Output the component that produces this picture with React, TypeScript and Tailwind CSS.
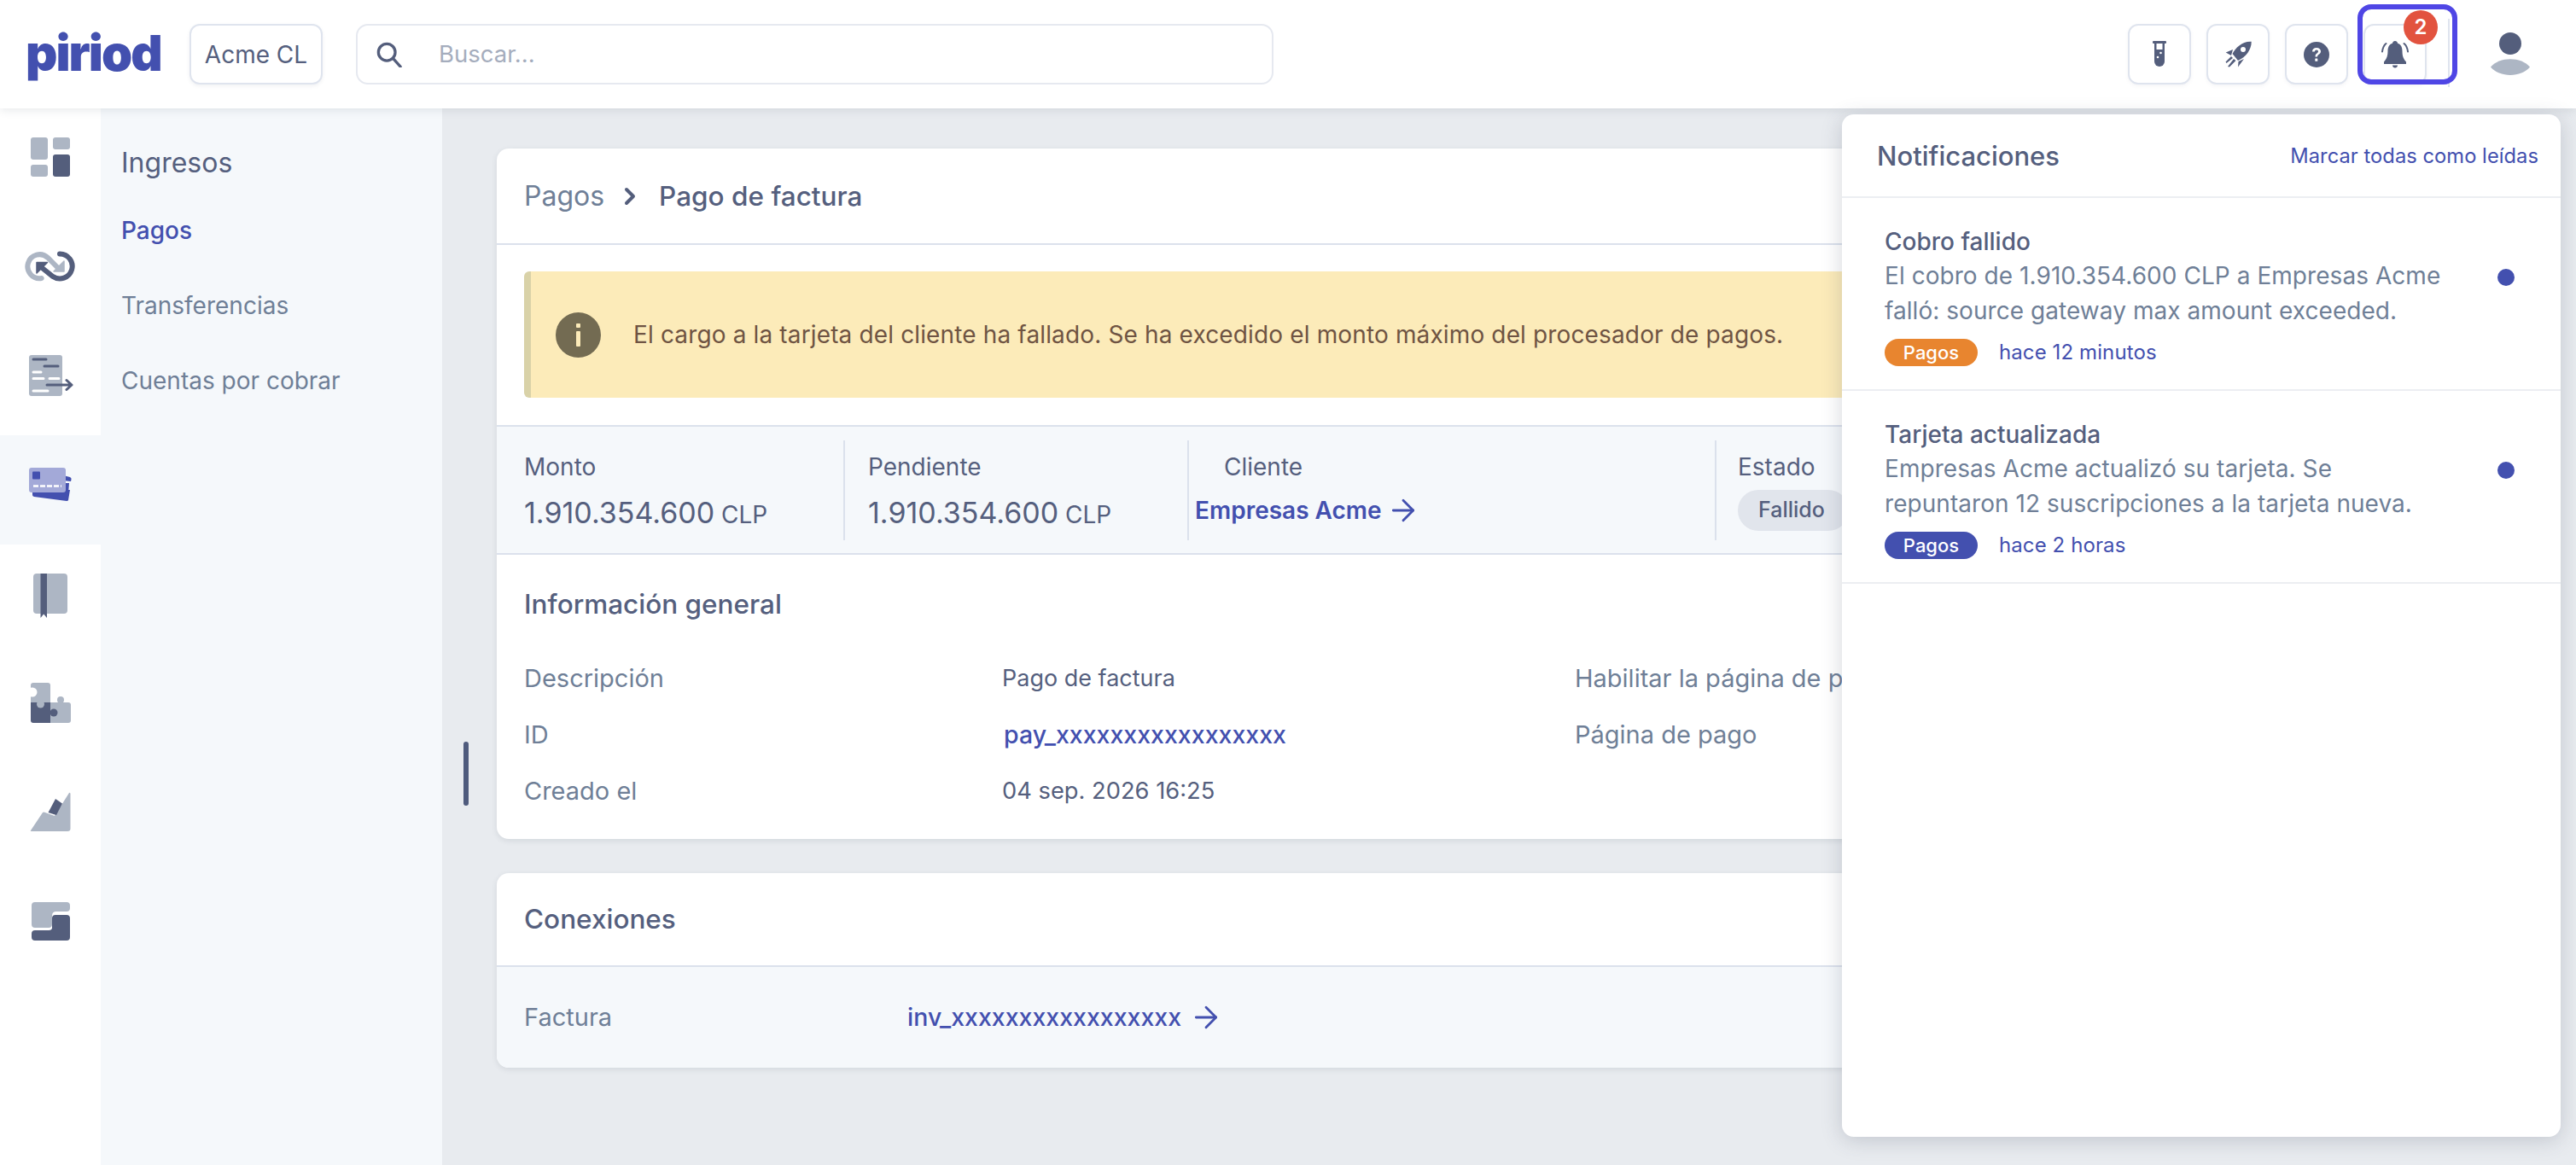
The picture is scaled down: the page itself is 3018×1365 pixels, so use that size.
import { ArrowRight, ChevronRight } from "lucide-react";

const dark = "#545e7c";
const light = "#adb6c4";
const blue = "#4350af";

function DashboardIcon() {
  return (
    <svg width="46" height="46" viewBox="0 0 46 46">
      <rect x="0" y="0" width="20" height="26" rx="3" fill={light} />
      <rect x="26" y="0" width="20" height="14" rx="3" fill={light} />
      <rect x="0" y="32" width="20" height="14" rx="3" fill={light} />
      <rect x="26" y="20" width="20" height="26" rx="3" fill={dark} />
    </svg>
  );
}

function LoopIcon() {
  return (
    <svg width="60" height="37" viewBox="0 0 60 37" fill="none" strokeLinecap="round">
      <path d="M19.700 33 A14 14 0 1 1 27 9 L38 20" stroke={light} strokeWidth="6" />
      <path d="M46 13 V25 H34 Z" fill={light} stroke={light} strokeWidth="1.500" strokeLinejoin="round" />
      <path d="M41 4.500 A14.500 14.500 0 1 1 33 31 L18 19" stroke={dark} strokeWidth="6" />
      <path d="M14 14.500 H26.500 L14 27 Z" fill={dark} stroke={dark} strokeWidth="1.500" strokeLinejoin="round" />
    </svg>
  );
}

function InvoiceIcon() {
  return (
    <svg width="52" height="48" viewBox="0 0 52 48" fill="none" strokeLinecap="round">
      <rect x="0" y="0" width="39" height="48" rx="3" fill={light} />
      <path d="M5 5 H20 M18 13 H34" stroke={dark} strokeWidth="3" />
      <path d="M5 20 H14 M5 27.500 H17 M24 27.500 H35 M5 42 H22" stroke="#fff" strokeWidth="3" />
      <path d="M21 35 H50 M44 29.500 L50 35 L44 40.500" stroke={dark} strokeWidth="3" strokeLinejoin="round" />
    </svg>
  );
}

function CardsIcon() {
  return (
    <svg width="50" height="39" viewBox="0 0 50 39">
      <path d="M40 9 L48 11 Q50 12 49.500 14 L49 16 L40 15 Z" fill={blue} />
      <path d="M4 26 H48 L46 38 Q46 39 44 39 L6 34 Q4 33.500 4 32 Z" fill={blue} />
      <path d="M42 18 H47 L46 30 H42 Z" fill={blue} />
      <rect x="0" y="0" width="43" height="29" rx="3" fill="#a3a9d8" />
      <rect x="4" y="4.500" width="9" height="9" rx="1" fill={blue} />
      <path d="M5 21.500 H38" stroke="#fff" strokeWidth="2.500" strokeDasharray="6 2" />
    </svg>
  );
}

function BookIcon() {
  return (
    <svg width="40" height="52" viewBox="0 0 40 52">
      <rect x="0" y="0" width="40" height="47" rx="4" fill={light} />
      <path d="M8.500 0 H16 V52 L12.200 47.500 L8.500 52 Z" fill={dark} />
    </svg>
  );
}

function PuzzleIcon() {
  return (
    <svg width="47" height="47" viewBox="0 0 47 47">
      <path d="M3 0 H20 Q23 0 23 3 V23 H0 V3 Q0 0 3 0 Z" fill={light} />
      <circle cx="2" cy="11" r="5.500" fill="#fff" />
      <path d="M0 23 H23 V47 H3 Q0 47 0 44 Z" fill={dark} />
      <circle cx="11.500" cy="25" r="4.500" fill={light} />
      <path d="M23 23 H44 Q47 23 47 26 V44 Q47 47 44 47 H23 Z" fill={light} />
      <circle cx="35" cy="20" r="4" fill={light} />
      <circle cx="27" cy="35" r="4.500" fill={dark} />
    </svg>
  );
}

function ChartIcon() {
  return (
    <svg width="48" height="47" viewBox="0 0 48 47">
      <path d="M1 45 L15 24 Q16 23 18 24 L29 28 L46 1 Q47 0 47.500 2 V43 Q47.500 46 44 46 H2 Q0 46 1 45 Z" fill={light} />
      <path d="M30 8 L38 13.500 L31 27 L21.500 24 Z" fill={dark} />
    </svg>
  );
}

function StackIcon() {
  return (
    <svg width="45" height="45" viewBox="0 0 45 45">
      <path d="M4 0 H41 Q45 0 45 4 V7 Q45 11 41 11 H29 Q24 11 24 16 V26 Q24 30 20 30 H4 Q0 30 0 26 V4 Q0 0 4 0 Z" fill={light} />
      <path d="M28 15 H41 Q45 15 45 19 V41 Q45 45 41 45 H4 Q0 45 0 41 V37 Q0 33 4 33 H20 Q24 33 24 30 V19 Q24 15 28 15 Z" fill={dark} />
    </svg>
  );
}

function TubeIcon() {
  return (
    <svg width="16" height="31" viewBox="0 0 16 31">
      <rect x="0" y="0" width="16" height="3" rx="1" fill={dark} />
      <path d="M2 3 H14 V24 A6 6 0 0 1 2 24 Z" fill={dark} />
      <rect x="4.500" y="3" width="7" height="7" fill="#fff" />
      <circle cx="9.500" cy="14" r="1.300" fill="#fff" />
      <circle cx="6" cy="19" r="1.300" fill="#fff" />
    </svg>
  );
}

function RocketIcon() {
  return (
    <svg width="31" height="31" viewBox="0 0 31 31">
      <path d="M30.700 0.700 C20 0 12 8 8.500 15 L15 23 C24 19 31 10 30.700 0.700 Z" fill={dark} />
      <circle cx="21" cy="10" r="3" fill="#fff" />
      <path d="M0.700 13.500 L9 10 L7 17 Z M15 30.500 L22 21 L15.500 24 Z" fill={dark} />
      <path d="M7 18 L0.500 24.500 L1.500 26 L9 20 Z M10 21 L3 30 L5 30.500 L12.500 23 Z" fill={dark} />
    </svg>
  );
}

function HelpIcon() {
  return (
    <svg width="30" height="30" viewBox="0 0 30 30">
      <circle cx="15" cy="15" r="15" fill={dark} />
      <path d="M10 11.500 C10 8.500 12 7 15 7 C18 7 20 8.800 20 11.200 C20 14.500 16 14.500 16 17.500 H13.500 C13.500 13.500 17 13.500 17 11.300 C17 10.200 16.200 9.500 15 9.500 C13.800 9.500 13 10.300 12.800 11.500 Z" fill="#fff" />
      <rect x="13.300" y="19.500" width="3" height="3.200" rx="0.500" fill="#fff" />
    </svg>
  );
}

function BellIcon() {
  return (
    <svg width="34" height="32" viewBox="0 0 34 32" fill="none">
      <path d="M17 0 C19 0 20 1.500 20 2.800 C24 4 25.500 7.500 25.500 12 C25.500 18 27 21 30 24.500 V27 H4 V24.500 C7 21 8.500 18 8.500 12 C8.500 7.500 10 4 14 2.800 C14 1.500 15 0 17 0 Z" fill={dark} />
      <path d="M14 28.500 H20 C20 30.500 18.500 31.500 17 31.500 C15.500 31.500 14 30.500 14 28.500 Z" fill={dark} />
      <path d="M6.500 3 C4 5 2.500 8 2 12.500 M27.500 3 C30 5 31.500 8 32 12.500" stroke={dark} strokeWidth="2" strokeLinecap="round" />
    </svg>
  );
}

function HeaderButton({ children }: { children: React.ReactNode }) {
  return (
    <button className="w-[74px] h-[71px] flex items-center justify-center rounded-[12px] border-[2px] border-[#dfe4ee] bg-white shadow-[0_2px_4px_rgba(80,90,120,0.06)]">
      {children}
    </button>
  );
}

function Notification({
  title,
  lines,
  tagClass,
  when,
}: {
  title: string;
  lines: string[];
  tagClass: string;
  when: string;
}) {
  return (
    <div className="relative h-[226px] border-b-[2px] border-[#eceef2] pl-[50px] pt-[31px]">
      <div className="text-[28px] leading-[40px] font-[450] text-[#555f7e]">{title}</div>
      <div className="text-[28px] leading-[41px] tracking-[0.05px] text-[#6f7f97]">
        {lines.map((l) => (
          <div key={l}>{l}</div>
        ))}
      </div>
      <div className="flex items-center gap-[25px] mt-[10px]">
        <span className={"w-[109px] h-[32px] rounded-full flex items-center justify-center text-white text-[22px] font-medium " + tagClass}>
          Pagos
        </span>
        <span className="text-[24px] tracking-[0.1px] text-[#4350af]">{when}</span>
      </div>
      <span className="absolute left-[768px] top-[83px] w-[20px] h-[20px] rounded-full bg-[#4350af]" />
    </div>
  );
}

export default function App() {
  return (
    <div className="relative h-screen w-full overflow-hidden bg-[#e8ebef] flex flex-col font-['Inter',sans-serif] text-[28px] text-[#555f7e]">
      {/* header */}
      <header className="relative z-10 h-[127px] shrink-0 bg-white shadow-[0_2px_10px_rgba(60,70,90,0.12)] flex items-center pl-[30px] pr-[54px]">
        <div className="w-[160px] text-[58px] leading-none font-black tracking-[-2px] text-[#4350af] -mt-[4px]">piriod</div>
        <button className="ml-[32px] w-[156px] h-[71px] rounded-[12px] border-[2px] border-[#dfe4ee] bg-white text-[28px] shadow-[0_2px_4px_rgba(80,90,120,0.08)]">
          Acme CL
        </button>
        <div className="ml-[39px] w-[1075px] h-[71px] rounded-[14px] border-[2px] border-[#e6e9f0] flex items-center pl-[22px]">
          <svg width="30" height="30" viewBox="0 0 32 32" fill="none" stroke={dark} strokeWidth="3.500">
            <circle cx="13" cy="13" r="10.500" />
            <path d="M21 21 L30 31" strokeLinecap="round" />
          </svg>
          <span className="ml-[43px] text-[27.500px] text-[#a5adbd]">Buscar...</span>
        </div>
        <div className="ml-auto flex items-center gap-[18px]">
          <HeaderButton>
            <TubeIcon />
          </HeaderButton>
          <HeaderButton>
            <RocketIcon />
          </HeaderButton>
          <HeaderButton>
            <HelpIcon />
          </HeaderButton>
          <HeaderButton>
            <BellIcon />
          </HeaderButton>
          <div className="relative ml-[57px] w-[46px] h-[52px]">
            <div className="absolute left-[10px] top-0 w-[26px] h-[26px] rounded-full bg-[#545e7c]" />
            <svg className="absolute left-0 top-[31px]" width="46" height="19" viewBox="0 0 46 19">
              <path d="M0 9.500 C10 -3 36 -3 46 9.500 C36 22 10 22 0 9.500 Z" fill={light} />
            </svg>
          </div>
        </div>
        {/* focus ring on the bell */}
        <div className="absolute left-[2868px] top-[22px] w-[2px] h-[80px] bg-[#dfe4ee]" />
        <div className="absolute left-[2762px] top-[5px] w-[117px] h-[94px] rounded-[16px] border-[6px] border-[#4f46e5]" />
        <span className="absolute left-[2816px] top-[12px] w-[40px] h-[40px] rounded-full bg-[#e2533f] text-white text-[24px] font-semibold flex items-center justify-center">
          2
        </span>
      </header>

      <div className="flex-1 flex overflow-hidden">
        {/* icon rail */}
        <nav className="w-[118px] shrink-0 bg-white flex flex-col">
          <div className="h-[127px] flex justify-center pt-[34px]">
            <DashboardIcon />
          </div>
          <div className="h-[128px] flex justify-center pt-[39px]">
            <LoopIcon />
          </div>
          <div className="h-[128px] flex justify-center pl-[2px] pt-[34px]">
            <InvoiceIcon />
          </div>
          <div className="h-[128px] bg-[#f5f8fb] flex justify-center pt-[38px]">
            <CardsIcon />
          </div>
          <div className="h-[128px] flex justify-center pt-[34px]">
            <BookIcon />
          </div>
          <div className="h-[128px] flex justify-center pt-[34px]">
            <PuzzleIcon />
          </div>
          <div className="h-[128px] flex justify-center pt-[34px]">
            <ChartIcon />
          </div>
          <div className="h-[128px] flex justify-center pt-[35px]">
            <StackIcon />
          </div>
        </nav>

        {/* sub nav */}
        <aside className="w-[400px] shrink-0 bg-[#f5f8fb] pl-[24px] pt-[44px]">
          <div className="text-[32px] leading-[40px] text-[#555f7e]">Ingresos</div>
          <div className="mt-[41px] text-[28px] leading-[36px] font-medium text-[#4350af]">Pagos</div>
          <div className="mt-[52px] text-[28px] leading-[36px] text-[#6f7f97]">Transferencias</div>
          <div className="mt-[52px] text-[28px] leading-[36px] text-[#6f7f97]">Cuentas por cobrar</div>
        </aside>

        {/* main */}
        <main className="relative flex-1 overflow-hidden pl-[64px] pt-[47px]">
          <div className="absolute left-[25px] top-[742px] w-[6px] h-[75px] rounded-full bg-[#4f5b7d]" />
          <div className="w-[1900px] flex flex-col gap-[40px]">
            <section className="h-[809px] rounded-[14px] bg-white shadow-[0_2px_6px_rgba(60,70,90,0.12)] overflow-hidden">
              <div className="h-[111px] flex items-center pl-[32px] border-b-[2px] border-[#dbe1ec] box-content">
                <span className="text-[32px] text-[#6f7f97]">Pagos</span>
                <ChevronRight className="ml-[14px] mr-[18px]" size={32} strokeWidth={3} color={dark} />
                <span className="text-[31.500px] font-[450] text-[#555f7e]">Pago de factura</span>
              </div>
              <div className="pt-[31px] pb-[32px] pl-[32px]">
                <div className="h-[148px] rounded-l-[6px] border-l-[8px] border-[#d9d2a8] bg-[#fcebb9] flex items-center pl-[29px]">
                  <svg width="53" height="53" viewBox="0 0 53 53">
                    <circle cx="26.500" cy="26.500" r="26.500" fill="#736b52" />
                    <rect x="24" y="13" width="5" height="5" rx="1" fill="#fcebb9" />
                    <rect x="24" y="22" width="5" height="18" rx="1" fill="#fcebb9" />
                  </svg>
                  <span className="ml-[38px] text-[28px] tracking-[0.14px] text-[#6f5443]">
                    El cargo a la tarjeta del cliente ha fallado. Se ha excedido el monto máximo del procesador de pagos.
                  </span>
                </div>
              </div>
              <div className="h-[152px] bg-[#f5f8fb] border-y-[2px] border-[#dbe1ec] flex items-center">
                <div className="w-[408px] h-[117px] border-r-[2px] border-[#dbe1ec] pl-[32px]">
                  <div className="leading-[36px] mt-[13px]">Monto</div>
                  <div className="mt-[17px] leading-[38px]">
                    <span className="text-[34px]">1.910.354.600</span> <span className="text-[28px]">CLP</span>
                  </div>
                </div>
                <div className="w-[403px] h-[117px] border-r-[2px] border-[#dbe1ec] pl-[27px]">
                  <div className="leading-[36px] mt-[13px]">Pendiente</div>
                  <div className="mt-[17px] leading-[38px]">
                    <span className="text-[34px]">1.910.354.600</span> <span className="text-[28px]">CLP</span>
                  </div>
                </div>
                <div className="w-[618px] h-[117px] border-r-[2px] border-[#dbe1ec] pl-[7px]">
                  <div className="leading-[36px] mt-[13px] ml-[34px]">Cliente</div>
                  <div className="mt-[14px] h-[38px] flex items-center text-[#4350af] font-semibold leading-[38px]">
                    Empresas Acme
                    <ArrowRight className="ml-[5px]" size={40} strokeWidth={1.700} />
                  </div>
                </div>
                <div className="h-[117px] pl-[25px]">
                  <div className="leading-[36px] mt-[13px]">Estado</div>
                  <div className="mt-[9px] w-[130px] h-[48px] rounded-full bg-[#e1e5ec] flex items-center pl-[24px] text-[25px] font-medium">
                    Fallido
                  </div>
                </div>
              </div>
              <div className="pl-[32px] pt-[37px]">
                <div className="text-[31.500px] leading-[42px] font-[450]">Información general</div>
                <div className="mt-[48px] flex flex-col gap-[30px]">
                  <div className="flex h-[36px] items-center">
                    <span className="w-[560px] text-[29px] text-[#6f7f97]">Descripción</span>
                    <span className="w-[671px] text-[27px]">Pago de factura</span>
                    <span className="text-[29px] text-[#6f7f97]">Habilitar la página de pago</span>
                  </div>
                  <div className="flex h-[36px] items-center">
                    <span className="w-[562px] text-[29px] text-[#6f7f97]">ID</span>
                    <span className="w-[669px] text-[#4350af] font-medium text-[28.500px]">pay_xxxxxxxxxxxxxxxxx</span>
                    <span className="text-[29px] text-[#6f7f97]">Página de pago</span>
                  </div>
                  <div className="flex h-[36px] items-center">
                    <span className="w-[560px] text-[29px] text-[#6f7f97]">Creado el</span>
                    <span className="text-[27.300px]">04 sep. 2026 16:25</span>
                  </div>
                </div>
              </div>
            </section>

            <section className="h-[228px] rounded-[14px] bg-white shadow-[0_2px_6px_rgba(60,70,90,0.12)] overflow-hidden">
              <div className="h-[110px] flex items-center pl-[32px] border-b-[2px] border-[#dbe1ec] text-[31.500px] font-[450]">
                Conexiones
              </div>
              <div className="h-[118px] bg-[#f5f8fb] flex items-center pl-[32px]">
                <span className="w-[449px] text-[29px] text-[#6f7f97]">Factura</span>
                <span className="text-[#4350af] font-medium text-[28.500px]">inv_xxxxxxxxxxxxxxxxx</span>
                <ArrowRight className="ml-[9px] text-[#4350af]" size={40} strokeWidth={1.700} />
              </div>
            </section>
          </div>
        </main>
      </div>

      {/* notifications panel */}
      <div className="absolute z-20 left-[2158px] top-[134px] w-[842px] h-[1198px] rounded-[14px] bg-white shadow-[0_4px_24px_rgba(60,70,90,0.22)] overflow-hidden">
        <div className="h-[98px] flex items-center justify-between pl-[41px] pr-[26px] pt-[2px] border-b-[2px] border-[#eceef2]">
          <span className="text-[31px] font-[450] text-[#555f7e]">Notificaciones</span>
          <span className="text-[23.700px] tracking-[0.05px] text-[#4350af]">Marcar todas como leídas</span>
        </div>
        <Notification
          title="Cobro fallido"
          lines={["El cobro de 1.910.354.600 CLP a Empresas Acme", "falló: source gateway max amount exceeded."]}
          tagClass="bg-[#e8852f]"
          when="hace 12 minutos"
        />
        <Notification
          title="Tarjeta actualizada"
          lines={["Empresas Acme actualizó su tarjeta. Se", "repuntaron 12 suscripciones a la tarjeta nueva."]}
          tagClass="bg-[#4350af]"
          when="hace 2 horas"
        />
      </div>
    </div>
  );
}
